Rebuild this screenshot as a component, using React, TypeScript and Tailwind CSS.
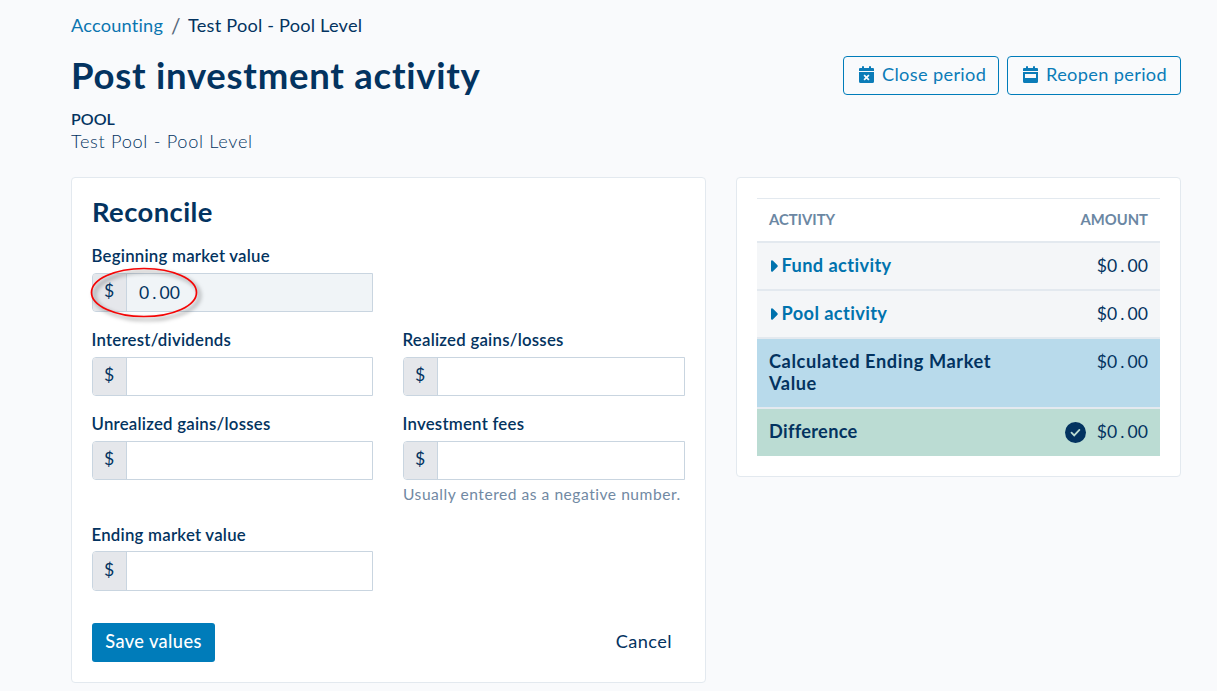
import type { ReactNode } from "react";

type FieldProps = {
  label: string;
  value?: string;
  disabled?: boolean;
  boxClass?: string;
  labelClass?: string;
  hint?: string;
  children?: ReactNode;
};

const Amount = ({ value }: { value: string }) => {
  const [whole, cents] = value.split(".");
  return (
    <span className="text-[17.6px] whitespace-nowrap">
      {whole}
      <span className="px-[3.1px]">.</span>
      {cents}
    </span>
  );
};

const CloseIcon = () => (
  <svg viewBox="0 0 15 17" className="mb-[2px] h-[17px] w-[15px] shrink-0" fill="currentColor">
    <path d="M0 5V3Q0 2 1 2H3V.3h2V2h5V.3h2V2h2Q15 2 15 3V5Z" />
    <path
      fillRule="evenodd"
      d="M0 6h15v9.500q0 1.500-1.500 1.500H1.500Q0 17 0 15.500ZM7.500 10.300 5.700 8.500 4.500 9.700 6.300 11.500 4.500 13.300 5.700 14.500 7.500 12.700 9.300 14.500 10.500 13.300 8.700 11.500 10.500 9.700 9.300 8.500Z"
    />
  </svg>
);

const ReopenIcon = () => (
  <svg viewBox="0 0 15 17" className="mb-[2px] h-[17px] w-[15px] shrink-0" fill="currentColor">
    <path d="M0 5V3Q0 2 1 2H3V.3h2V2h5V.3h2V2h2Q15 2 15 3V5Z" />
    <path
      fillRule="evenodd"
      d="M0 6h15v9.500q0 1.500-1.500 1.500H1.500Q0 17 0 15.500ZM2 8v4h11V8Z"
    />
  </svg>
);

const Caret = () => (
  <svg viewBox="0 0 8 12" className="mr-[3.5px] ml-[1px] h-3 w-2" fill="currentColor">
    <path d="M1 1.200Q1 .3 2 .3 2.500.3 3 .8L7.500 5.300Q8 6 7.500 6.700L3 11.200Q2.500 11.700 2 11.700 1 11.700 1 10.800Z" />
  </svg>
);

const Field = ({
  label,
  value,
  disabled,
  boxClass = "h-[39px]",
  labelClass = "h-[29px]",
  hint,
  children,
}: FieldProps) => {
  return (
    <div>
      <label
        className={`-ml-[0.5px] block text-[16.8px] leading-[24px] font-semibold tracking-[0.24px] ${labelClass}`}
      >
        {label}
      </label>
      <div
        className={`relative flex rounded-l border border-[#c9d5e0] ${boxClass} ${
          disabled ? "bg-[#f0f4f7]" : "bg-white"
        }`}
      >
        <span className="flex w-[34px] items-center justify-center rounded-l-[3px] border-r border-[#c9d5e0] bg-[#e5e7eb] pr-[1px] pb-[2px] text-[17.6px]">
          $
        </span>
        <span className="flex items-center pt-[1px] pl-3">{value && <Amount value={value} />}</span>
        {children}
      </div>
      {hint && (
        <p className="mt-[3px] text-[15.6px] leading-[22px] tracking-[0.52px] whitespace-nowrap text-[#7189a3]">
          {hint}
        </p>
      )}
    </div>
  );
};

export default function App() {
  return (
    <div className="h-[691px] w-[1217px] overflow-hidden bg-[#f9fafc] pr-9 pl-[71px] font-['Lato',sans-serif] text-[#033360]">
      <nav className="flex h-[52px] items-center text-[18.2px] tracking-[0.2px]">
        <a className="text-[#0b75b0]">Accounting</a>
        <span className="w-[25px] pl-2 text-[21px] text-[#56687a]">/</span>
        <span>Test Pool - Pool Level</span>
      </nav>

      <header className="flex h-[125px] justify-between">
        <div>
          <h1 className="-mt-[1px] text-[36.5px] leading-[48px] font-bold tracking-[0.75px]">
            Post investment activity
          </h1>
          <div className="mt-[9px] text-base leading-[22px] font-semibold">POOL</div>
          <div className="text-[18.2px] leading-[23px] font-light tracking-[0.68px]">
            Test Pool - Pool Level
          </div>
        </div>
        <div className="mt-1 flex h-[39px] gap-2 text-[18.2px] tracking-[0.34px] text-[#0b7cb8]">
          <button className="flex w-[156px] items-center gap-2 rounded border border-[#007cba] pl-[15px]">
            <CloseIcon />
            <span className="pb-[2px]">Close period</span>
          </button>
          <button className="flex w-[174px] items-center gap-2 rounded border border-[#007cba] pl-[15px]">
            <ReopenIcon />
            <span className="pb-[2px]">Reopen period</span>
          </button>
        </div>
      </header>

      <main className="flex items-start gap-[30px]">
        <section className="h-[506px] w-[635px] rounded border border-[#e3e9ef] bg-white px-5">
          <h2 className="mt-4 h-[50px] text-[27.4px] leading-[36px] font-bold tracking-[0.42px]">
            Reconcile
          </h2>
          <div className="grid grid-cols-[281px_282px] gap-x-[30px]">
            <div className="h-[84px]">
              <Field label="Beginning market value" value="0.00" disabled>
                <svg
                  viewBox="0 0 116 60"
                  className="absolute -top-[10px] -left-[7px] h-[60px] w-[116px] overflow-visible"
                  fill="none"
                >
                  <ellipse
                    cx="58"
                    cy="28.500"
                    rx="52.500"
                    ry="24"
                    stroke="#f50505"
                    strokeWidth="1.700"
                    className="drop-shadow-[3px_3px_2px_rgba(0,0,0,0.5)]"
                  />
                </svg>
              </Field>
            </div>
            <div />
            <div className="h-[84px]">
              <Field label="Interest/dividends" />
            </div>
            <Field label="Realized gains/losses" />
            <div className="h-[111px]">
              <Field label="Unrealized gains/losses" />
            </div>
            <Field label="Investment fees" hint="Usually entered as a negative number." />
            <Field label="Ending market value" labelClass="h-[28px]" boxClass="h-[40px]" />
          </div>
          <div className="mt-8 flex items-center justify-between text-[18.2px] tracking-[0.42px]">
            <button className="h-[39px] w-[123px] rounded-[3px] bg-[#007cba] pb-[1px] font-medium text-white">
              Save values
            </button>
            <button className="pr-[13px] pb-[1px]">Cancel</button>
          </div>
        </section>

        <section className="h-[300px] w-[445px] rounded border border-[#e3e9ef] bg-white p-5">
          <div className="flex h-[43px] items-center justify-between border-t border-[#e3e9ef] px-3 pb-[2px] text-[14.8px] font-bold text-[#6b87a3]">
            <span>ACTIVITY</span>
            <span>AMOUNT</span>
          </div>
          <div className="flex h-[48px] items-center justify-between border-t-2 border-[#e3e9ef] bg-[#f4f6f8] px-3">
            <a className="flex items-center text-[18.2px] font-bold tracking-[0.4px] text-[#0073ae]">
              <Caret />
              Fund activity
            </a>
            <Amount value="$0.00" />
          </div>
          <div className="flex h-[48px] items-center justify-between border-t-2 border-[#e3e9ef] bg-[#f4f6f8] px-3">
            <a className="flex items-center text-[18.2px] font-bold tracking-[0.4px] text-[#0073ae]">
              <Caret />
              Pool activity
            </a>
            <Amount value="$0.00" />
          </div>
          <div className="flex h-[70px] items-start justify-between border-t-2 border-[#e3e9ef] bg-[#b8daeb] px-3 pt-3 leading-[22px]">
            <span className="-mt-[1px] w-[240px] text-[18.2px] font-bold tracking-[0.59px]">
              Calculated Ending Market Value
            </span>
            <Amount value="$0.00" />
          </div>
          <div className="flex h-[49px] items-center border-t-2 border-[#e3e9ef] bg-[#bbdcd3] px-3">
            <span className="flex-1 pb-[2px] text-[18.2px] font-bold tracking-[0.3px]">
              Difference
            </span>
            <svg viewBox="0 0 21 21" className="mr-[11px] size-[21px]">
              <circle cx="10.500" cy="10.500" r="10.500" fill="#033360" />
              <path
                d="m6.500 10.700 2.700 2.700 5.200-5.500"
                fill="none"
                stroke="#bbdcd3"
                strokeWidth="1.800"
                strokeLinecap="round"
              />
            </svg>
            <Amount value="$0.00" />
          </div>
        </section>
      </main>
    </div>
  );
}
